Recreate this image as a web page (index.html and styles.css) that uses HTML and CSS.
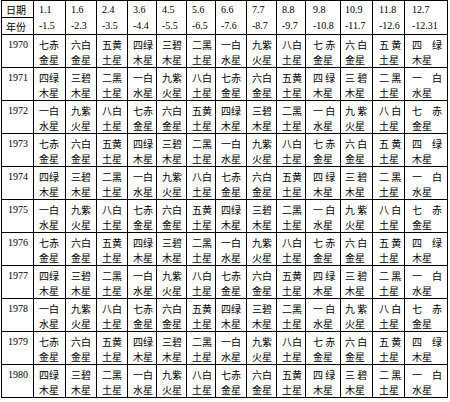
FILE: index.html
```html
<!DOCTYPE html>
<html lang="zh">
<head>
<meta charset="utf-8">
<title>九星表</title>
<link rel="stylesheet" href="styles.css">
</head>
<body>
<table class="stars">
  <colgroup>
    <col class="w32"><col class="w32"><col class="w31"><col class="w31"><col class="w29"><col class="w30"><col class="w29"><col class="w31"><col class="w30"><col class="w29"><col class="w35"><col class="w32"><col class="w32"><col class="w43">
  </colgroup>
  <thead>
    <tr class="h1">
      <th class="lab">日期</th>
      <td rowspan="2" class="d">1.1<br>-1.5</td>
      <td rowspan="2" class="d">1.6<br>-2.3</td>
      <td rowspan="2" class="d">2.4<br>-3.5</td>
      <td rowspan="2" class="d">3.6<br>-4.4</td>
      <td rowspan="2" class="d">4.5<br>-5.5</td>
      <td rowspan="2" class="d">5.6<br>-6.5</td>
      <td rowspan="2" class="d">6.6<br>-7.6</td>
      <td rowspan="2" class="d">7.7<br>-8.7</td>
      <td rowspan="2" class="d">8.8<br>-9.7</td>
      <td rowspan="2" class="d">9.8<br>-10.8</td>
      <td rowspan="2" class="d">10.9<br>-11.7</td>
      <td rowspan="2" class="d">11.8<br>-12.6</td>
      <td rowspan="2" class="d">12.7<br>-12.31</td>
    </tr>
    <tr class="h2">
      <th class="lab">年份</th>
    </tr>
  </thead>
  <tbody>
    <tr><td class="y">1970</td><td>七赤<br>金星</td><td>六白<br>金星</td><td>五黄<br>土星</td><td>四绿<br>木星</td><td>三碧<br>木星</td><td>二黑<br>土星</td><td>一白<br>水星</td><td>九紫<br>火星</td><td>八白<br>土星</td><td>七 赤<br>金星</td><td>六 白<br>金星</td><td>五 黄<br>土星</td><td>四　绿<br>木星</td></tr>
    <tr><td class="y">1971</td><td>四绿<br>木星</td><td>三碧<br>木星</td><td>二黑<br>土星</td><td>一白<br>水星</td><td>九紫<br>火星</td><td>八白<br>土星</td><td>七赤<br>金星</td><td>六白<br>金星</td><td>五黄<br>土星</td><td>四 绿<br>木星</td><td>三 碧<br>木星</td><td>二 黑<br>土星</td><td>一　白<br>水星</td></tr>
    <tr><td class="y">1972</td><td>一白<br>水星</td><td>九紫<br>火星</td><td>八白<br>土星</td><td>七赤<br>金星</td><td>六白<br>金星</td><td>五黄<br>土星</td><td>四绿<br>木星</td><td>三碧<br>木星</td><td>二黑<br>土星</td><td>一 白<br>水星</td><td>九 紫<br>火星</td><td>八 白<br>土星</td><td>七　赤<br>金星</td></tr>
    <tr><td class="y">1973</td><td>七赤<br>金星</td><td>六白<br>金星</td><td>五黄<br>土星</td><td>四绿<br>木星</td><td>三碧<br>木星</td><td>二黑<br>土星</td><td>一白<br>水星</td><td>九紫<br>火星</td><td>八白<br>土星</td><td>七 赤<br>金星</td><td>六 白<br>金星</td><td>五 黄<br>土星</td><td>四　绿<br>木星</td></tr>
    <tr><td class="y">1974</td><td>四绿<br>木星</td><td>三碧<br>木星</td><td>二黑<br>土星</td><td>一白<br>水星</td><td>九紫<br>火星</td><td>八白<br>土星</td><td>七赤<br>金星</td><td>六白<br>金星</td><td>五黄<br>土星</td><td>四 绿<br>木星</td><td>三 碧<br>木星</td><td>二 黑<br>土星</td><td>一　白<br>水星</td></tr>
    <tr><td class="y">1975</td><td>一白<br>水星</td><td>九紫<br>火星</td><td>八白<br>土星</td><td>七赤<br>金星</td><td>六白<br>金星</td><td>五黄<br>土星</td><td>四绿<br>木星</td><td>三碧<br>木星</td><td>二黑<br>土星</td><td>一 白<br>水星</td><td>九 紫<br>火星</td><td>八 白<br>土星</td><td>七　赤<br>金星</td></tr>
    <tr><td class="y">1976</td><td>七赤<br>金星</td><td>六白<br>金星</td><td>五黄<br>土星</td><td>四绿<br>木星</td><td>三碧<br>木星</td><td>二黑<br>土星</td><td>一白<br>水星</td><td>九紫<br>火星</td><td>八白<br>土星</td><td>七 赤<br>金星</td><td>六 白<br>金星</td><td>五 黄<br>土星</td><td>四　绿<br>木星</td></tr>
    <tr><td class="y">1977</td><td>四绿<br>木星</td><td>三碧<br>木星</td><td>二黑<br>土星</td><td>一白<br>水星</td><td>九紫<br>火星</td><td>八白<br>土星</td><td>七赤<br>金星</td><td>六白<br>金星</td><td>五黄<br>土星</td><td>四 绿<br>木星</td><td>三 碧<br>木星</td><td>二 黑<br>土星</td><td>一　白<br>水星</td></tr>
    <tr><td class="y">1978</td><td>一白<br>水星</td><td>九紫<br>火星</td><td>八白<br>土星</td><td>七赤<br>金星</td><td>六白<br>金星</td><td>五黄<br>土星</td><td>四绿<br>木星</td><td>三碧<br>木星</td><td>二黑<br>土星</td><td>一 白<br>水星</td><td>九 紫<br>火星</td><td>八 白<br>土星</td><td>七　赤<br>金星</td></tr>
    <tr><td class="y">1979</td><td>七赤<br>金星</td><td>六白<br>金星</td><td>五黄<br>土星</td><td>四绿<br>木星</td><td>三碧<br>木星</td><td>二黑<br>土星</td><td>一白<br>水星</td><td>九紫<br>火星</td><td>八白<br>土星</td><td>七 赤<br>金星</td><td>六 白<br>金星</td><td>五 黄<br>土星</td><td>四　绿<br>木星</td></tr>
    <tr><td class="y">1980</td><td>四绿<br>木星</td><td>三碧<br>木星</td><td>二黑<br>土星</td><td>一白<br>水星</td><td>九紫<br>火星</td><td>八白<br>土星</td><td>七赤<br>金星</td><td>六白<br>金星</td><td>五黄<br>土星</td><td>四 绿<br>木星</td><td>三 碧<br>木星</td><td>二 黑<br>土星</td><td>一　白<br>水星</td></tr>
  </tbody>
</table>
</body>
</html>
```
FILE: styles.css
```css
html, body {
  margin: 0;
  padding: 0;
  background: #fff;
}

body {
  padding: 0 0 0 1px;
  font-family: "Liberation Serif", "Noto Sans CJK SC", serif;
  color: #000;
}

.stars {
  border-collapse: collapse;
  table-layout: fixed;
  width: 447px;
  font-size: 10px;
}

.w29 { width: 29px; }
.w30 { width: 30px; }
.w31 { width: 31px; }
.w32 { width: 32px; }
.w35 { width: 35px; }
.w43 { width: 43px; }

.stars th,
.stars td {
  border: 1px solid #000;
  padding: 2px 0 0 5px;
  line-height: 15px;
  text-align: left;
  vertical-align: top;
  font-weight: normal;
  white-space: nowrap;
  overflow: hidden;
}

.stars tbody td {
  font-family: "Noto Sans CJK SC", sans-serif;
}

.stars tbody td.y {
  font-family: "Liberation Serif", serif;
  padding-left: 6px;
}

.stars .lab {
  font-family: "Noto Sans CJK SC", sans-serif;
  height: 14px;
  padding: 1px 0 0 4px;
}

.stars .d {
  padding-top: 1px;
  line-height: 16px;
}

.stars tr > :nth-child(11) { padding-left: 7px; }
.stars tr > :nth-child(12) { padding-left: 4px; }
.stars tr > :nth-child(13) { padding-left: 6px; }
.stars tr > :nth-child(14) { padding-left: 7px; }
```
